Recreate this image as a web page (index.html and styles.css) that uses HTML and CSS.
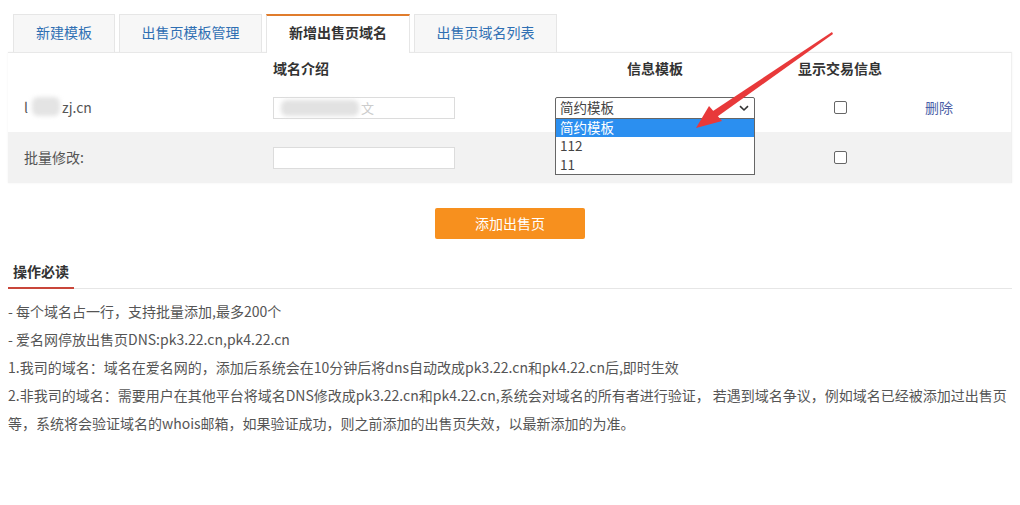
FILE: index.html
```html
<!DOCTYPE html>
<html lang="zh-CN">
<head>
<meta charset="utf-8">
<title>新增出售页域名</title>
<link rel="stylesheet" href="styles.css">
</head>
<body>
<div class="page">
  <div class="tabs">
    <div class="tab tab-1">新建模板</div>
    <div class="tab tab-2">出售页模板管理</div>
    <div class="tab tab-3 active">新增出售页域名</div>
    <div class="tab tab-4">出售页域名列表</div>
  </div>
  <div class="panel">
    <div class="row head">
      <div class="cell"></div>
      <div class="cell">域名介绍</div>
      <div class="cell center">信息模板</div>
      <div class="cell center">显示交易信息</div>
      <div class="cell"></div>
    </div>
    <div class="row body">
      <div class="cell domain">l<span class="blur blur-a"></span>zj.cn</div>
      <div class="cell"><div class="input"><span class="blur blur-b"></span><span class="faint">文</span></div></div>
      <div class="cell">
        <div class="select">
          <span>简约模板</span>
          <svg class="chev" width="10" height="7" viewBox="0 0 10 7"><path d="M1 1.2 L5 5 L9 1.2" fill="none" stroke="#333" stroke-width="1.6"/></svg>
          <div class="listbox">
            <div class="opt sel">简约模板</div>
            <div class="opt">112</div>
            <div class="opt">11</div>
          </div>
        </div>
      </div>
      <div class="cell center"><span class="check"></span></div>
      <div class="cell text"><a class="del">删除</a></div>
    </div>
    <div class="row body gray">
      <div class="cell domain">批量修改:</div>
      <div class="cell"><div class="input"></div></div>
      <div class="cell"></div>
      <div class="cell center"><span class="check"></span></div>
      <div class="cell"></div>
    </div>
  </div>
  <div class="actions"><button class="btn">添加出售页</button></div>
  <div class="section-head"><span class="section-title">操作必读</span></div>
  <div class="notes">
    <p>- 每个域名占一行，支持批量添加,最多200个</p>
    <p>- 爱名网停放出售页DNS:pk3.22.cn,pk4.22.cn</p>
    <p>1.我司的域名：域名在爱名网的，添加后系统会在10分钟后将dns自动改成pk3.22.cn和pk4.22.cn后,即时生效</p>
    <p><span class="line">2.非我司的域名：需要用户在其他平台将域名DNS修改成pk3.22.cn和pk4.22.cn,系统会对域名的所有者进行验证， 若遇到域名争议，例如域名已经被添加过出售页</span><span class="line">等，系统将会验证域名的whois邮箱，如果验证成功，则之前添加的出售页失效，以最新添加的为准。</span></p>
  </div>
</div>
<svg class="arrow" width="1020" height="505" viewBox="0 0 1020 505">
  <polygon points="832,32 833,34 714,119 710,113" fill="#e8393a"/>
  <polygon points="696,128 709,106 722,121" fill="#e8393a"/>
</svg>
</body>
</html>
```
FILE: styles.css
```css
body {
  margin: 0;
  background: #fff;
  font-family: "Noto Sans CJK SC", "Noto Sans", sans-serif;
  font-size: 14px;
  color: #555;
}
.page {
  padding: 14px 8px 0;
  width: 1004px;
}
.tabs {
  display: flex;
  gap: 4px;
  padding-left: 5px;
  height: 38px;
}
.tab {
  box-sizing: border-box;
  height: 38px;
  border: 1px solid #e6e6e6;
  border-bottom: none;
  background: #f7f7f7;
  color: #2f6fb3;
  text-align: center;
  line-height: 35px;
}
.tab-1 { width: 102px; }
.tab-2 { width: 143px; }
.tab-3 { width: 144px; }
.tab-4 { width: 143px; }
.tab.active {
  background: #fff;
  color: #333;
  font-weight: bold;
  border-top: 2px solid #e07c2c;
  line-height: 33px;
  height: 39px;
  position: relative;
  z-index: 1;
}
.panel {
  background: #fff;
  border-top: 1px solid #e8e8e8;
  border-right: 1px solid #f0f0f0;
  box-shadow: 0 0 2px rgba(0,0,0,0.06);
}
.row {
  display: grid;
  grid-template-columns: 265px 282px 200px 170px 1fr;
  align-items: center;
}
.row.head { height: 30px; color: #333; font-weight: bold; }
.row.head .cell { padding-bottom: 1px; }
.row.body { height: 49px; }
.row.gray { height: 51px; background: #f2f2f2; }
.cell { display: flex; align-items: center; }
.cell.center { justify-content: center; }
.cell.text { padding-bottom: 2px; }
.domain { padding-left: 16px; color: #555; padding-bottom: 2px; }
.blur {
  display: inline-block;
  background: #e4e4e4;
  filter: blur(2px);
  border-radius: 6px;
}
.blur-a { width: 28px; height: 19px; margin: 0 2px 0 4px; }
.blur-b { width: 78px; height: 16px; margin-left: 7px; background: #e2e2e2; }
.faint { color: #ccc; font-size: 13px; margin-left: 2px; }
.input {
  box-sizing: border-box;
  width: 182px;
  height: 22px;
  border: 1px solid #dcdcdc;
  background: #fff;
  display: flex;
  align-items: center;
}
.select {
  position: relative;
  box-sizing: border-box;
  width: 200px;
  height: 22px;
  border: 1px solid #666;
  border-radius: 2px 2px 0 0;
  background: #fff;
  color: #444;
  font-size: 13.5px;
  display: flex;
  align-items: center;
  padding-left: 4px;
  padding-bottom: 1px;
}
.chev { position: absolute; right: 5px; top: 7px; }
.listbox {
  position: absolute;
  top: 20px;
  left: -1px;
  width: 200px;
  box-sizing: border-box;
  border: 1px solid #666;
  background: #fff;
  z-index: 2;
}
.opt {
  height: 18.5px;
  line-height: 17px;
  padding-left: 4px;
  color: #444;
  font-size: 13.5px;
}
.opt.sel { background: #2b8ff0; color: #fff; }
.check {
  box-sizing: border-box;
  width: 13px;
  height: 13px;
  border: 1px solid #666;
  border-radius: 2px;
  background: #fff;
}
.del { color: #4d5fa8; }
.actions {
  display: flex;
  justify-content: center;
  padding-top: 25px;
}
.btn {
  width: 150px;
  height: 31px;
  border: none;
  border-radius: 2px;
  background: #f7901e;
  color: #fff;
  font-family: inherit;
  font-size: 14px;
  padding-bottom: 2px;
}
.section-head {
  margin-top: 18px;
  border-bottom: 1px solid #e6e6e6;
  height: 31px;
  display: flex;
}
.section-title {
  padding: 0 5px;
  line-height: 29px;
  font-weight: bold;
  color: #333;
  border-bottom: 2px solid #c9463a;
  margin-bottom: -1px;
}
.notes { padding-top: 8px; }
.notes p {
  margin: 0;
  line-height: 28px;
  color: #555;
  white-space: nowrap;
}
.notes .line { display: block; }
.arrow {
  position: absolute;
  top: 0;
  left: 0;
  pointer-events: none;
  z-index: 5;
}
```
